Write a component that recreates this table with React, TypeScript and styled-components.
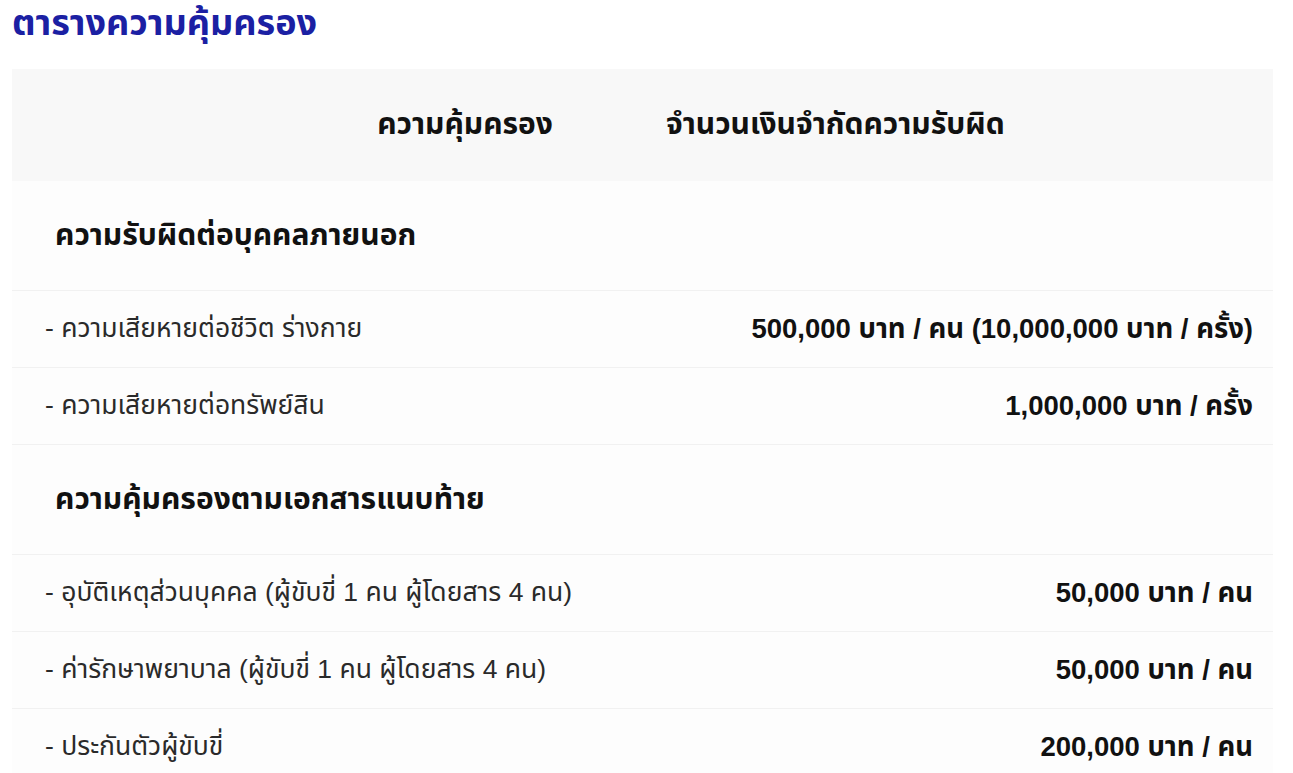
import { FC, Fragment } from 'react'
import styled, { createGlobalStyle } from 'styled-components'

const GlobalStyle = createGlobalStyle`
  body {
    margin: 0;
    background: #ffffff;
    font-family: 'Liberation Sans', 'Noto Sans Thai', 'Noto Sans', sans-serif;
    color: #1a1a1a;
  }
`

const Page = styled.div`
  padding: 0 20px 0 12px;
`

const Title = styled.h1`
  margin: 0;
  height: 69px;
  font-size: 36px;
  font-weight: 700;
  line-height: 46px;
  color: #1b20a3;
`

const Table = styled.div`
  display: grid;
  grid-template-columns: 631px 630px;
`

const HeadCell = styled.div<{ align: 'left' | 'right' }>`
  height: 112px;
  display: flex;
  align-items: center;
  justify-content: ${(p) => (p.align === 'right' ? 'flex-end' : 'flex-start')};
  padding: ${(p) => (p.align === 'right' ? '0 90px 0 0' : '0 0 0 23px')};
  background: #f8f8f8;
  font-size: 30px;
  font-weight: 700;
  color: #111;
`

const SectionCell = styled.div`
  grid-column: 1 / 3;
  height: 109px;
  display: flex;
  align-items: center;
  padding-left: 43px;
  background: #fdfdfd;
  border-bottom: 1px solid #f1f1f1;
  font-size: 30px;
  font-weight: 700;
  color: #111;
`

const ItemCell = styled.div<{ value? }>`
  height: 76px;
  display: flex;
  align-items: center;
  justify-content: ${(p) => (p.value ? 'flex-end' : 'flex-start')};
  padding: ${(p) => (p.value ? '0 20px 0 0' : '0 0 0 33px')};
  background: #fdfdfd;
  border-bottom: 1px solid #f1f1f1;
  font-size: ${(p) => (p.value ? '27.5px' : '26.5px')};
  font-weight: ${(p) => (p.value ? 700 : 400)};
  color: ${(p) => (p.value ? '#111' : '#2a2a2a')};
`

const sections = [
  {
    name: 'ความรับผิดต่อบุคคลภายนอก',
    items: [
      ['- ความเสียหายต่อชีวิต ร่างกาย', '500,000 บาท / คน (10,000,000 บาท / ครั้ง)'],
      ['- ความเสียหายต่อทรัพย์สิน', '1,000,000 บาท / ครั้ง'],
    ],
  },
  {
    name: 'ความคุ้มครองตามเอกสารแนบท้าย',
    items: [
      ['- อุบัติเหตุส่วนบุคคล (ผู้ขับขี่ 1 คน ผู้โดยสาร 4 คน)', '50,000 บาท / คน'],
      ['- ค่ารักษาพยาบาล (ผู้ขับขี่ 1 คน ผู้โดยสาร 4 คน)', '50,000 บาท / คน'],
      ['- ประกันตัวผู้ขับขี่', '200,000 บาท / คน'],
    ],
  },
]

const App: FC = () => (
  <Page>
    <GlobalStyle />
    <Title>ตารางความคุ้มครอง</Title>
    <Table>
      <HeadCell align="right">ความคุ้มครอง</HeadCell>
      <HeadCell align="left">จำนวนเงินจำกัดความรับผิด</HeadCell>
      {sections.map((s) => (
        <Fragment key={s.name}>
          <SectionCell>{s.name}</SectionCell>
          {s.items.map(([label, amount]) => (
            <Fragment key={label}>
              <ItemCell>{label}</ItemCell>
              <ItemCell value>{amount}</ItemCell>
            </Fragment>
          ))}
        </Fragment>
      ))}
    </Table>
  </Page>
)

export default App
